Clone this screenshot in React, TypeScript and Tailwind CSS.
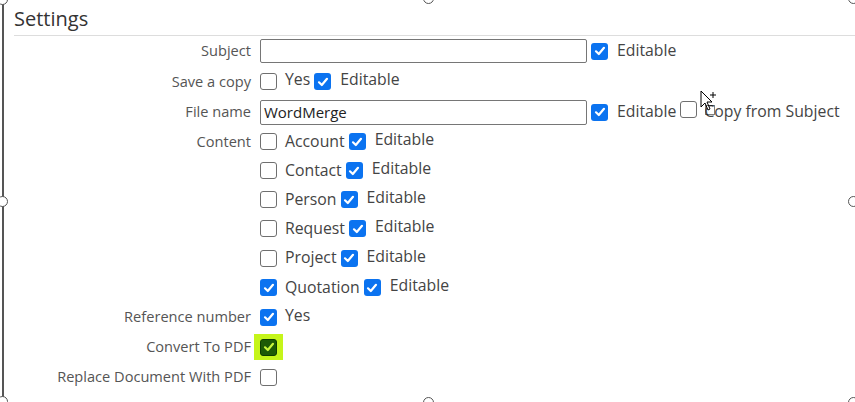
import React from "react";

const font = { fontFamily: '"Open Sans", "Noto Sans", sans-serif' };

function Box({ checked = false }: { checked?: boolean }) {
  if (checked) {
    return (
      <span className="inline-flex h-[17px] w-[17px] shrink-0 items-center justify-center rounded-[3px] bg-[#0b73f0]">
        <svg width="12" height="12" viewBox="0 0 12 12">
          <path d="M2 6.3 L4.8 9 L10 2.8" fill="none" stroke="#fff" strokeWidth="2.2" strokeLinecap="round" strokeLinejoin="round" />
        </svg>
      </span>
    );
  }
  return <span className="inline-block h-[17px] w-[17px] shrink-0 rounded-[3px] border border-[#6f6f6f] bg-white" />;
}

function Row({ label, h, children }: { label?: string; h: string; children?: React.ReactNode }) {
  return (
    <div className={`flex items-center ${h}`}>
      <div className="w-[237px] shrink-0 whitespace-nowrap text-right text-[14.6px] text-[#555]">{label}</div>
      <div className="ml-[9px] flex items-center whitespace-nowrap">{children}</div>
    </div>
  );
}

function Txt({ children, cls = "" }: { children: React.ReactNode; cls?: string }) {
  return <span className={`text-[15.8px] leading-none text-[#444] ${cls}`}>{children}</span>;
}

function Handle({ cls }: { cls: string }) {
  return <span className={`absolute h-[11px] w-[11px] rounded-full border-[1.5px] border-[#555] bg-white ${cls}`} />;
}

function ContentRow({ name, h, checked = false }: { name: string; h: string; checked?: boolean }) {
  return (
    <Row label={name === "Account" ? "Content" : undefined} h={h}>
      <Box checked={checked} />
      <Txt cls="ml-[8px]">{name}</Txt>
      <span className="ml-[4px]">
        <Box checked />
      </span>
      <Txt cls="ml-[9px] -mt-[3px]">Editable</Txt>
    </Row>
  );
}

export default function App() {
  return (
    <div className="relative h-[402px] w-[855px] overflow-hidden bg-white" style={font}>
      <div className="absolute left-[2px] top-0 h-[402px] w-[2px] bg-[#555]" />
      <Handle cls="left-[-3px] top-[-6px]" />
      <Handle cls="left-[423px] top-[-7px]" />
      <Handle cls="left-[-3px] top-[196px]" />
      <Handle cls="left-[-3px] top-[396px]" />
      <Handle cls="left-[423px] top-[397px]" />
      <Handle cls="left-[848px] top-[-7px]" />
      <Handle cls="left-[848px] top-[196px]" />
      <Handle cls="left-[848px] top-[397px]" />

      <div className="pl-[14px]">
        <div className="h-[36px] pt-[6px]">
          <div className="text-[20px] leading-[26px] text-[#333]">Settings</div>
          <div className="mt-[3px] h-[1px] bg-[#ddd]" />
        </div>

        <Row label="Subject" h="h-[30px]">
          <span className="block h-[24px] w-[327px] rounded-[2px] border border-[#767676] bg-white" />
          <span className="ml-[4px]"><Box checked /></span>
          <Txt cls="ml-[9px]">Editable</Txt>
        </Row>

        <Row label="Save a copy" h="h-[31px]">
          <Box />
          <Txt cls="ml-[8px] -mt-[3px]">Yes</Txt>
          <span className="ml-[4px]"><Box checked /></span>
          <Txt cls="ml-[9px] -mt-[3px]">Editable</Txt>
        </Row>

        <Row label="File name" h="h-[30px]">
          <span className="flex h-[25px] w-[327px] items-center rounded-[2px] border border-[#767676] bg-white pl-[3px] text-[15px] text-[#222]">
            WordMerge
          </span>
          <span className="ml-[4px]"><Box checked /></span>
          <Txt cls="ml-[9px]">Editable</Txt>
          <span className="ml-[4px]"><Box /></span>
          <Txt cls="ml-[7px]">Copy from Subject</Txt>
        </Row>

        <ContentRow name="Account" h="h-[29px]" />
        <ContentRow name="Contact" h="h-[29px]" />
        <ContentRow name="Person" h="h-[29px]" />
        <ContentRow name="Request" h="h-[29px]" />
        <ContentRow name="Project" h="h-[30px]" />
        <ContentRow name="Quotation" h="h-[29px]" checked />

        <Row label="Reference number" h="h-[30px]">
          <Box checked />
          <Txt cls="ml-[8px] -mt-[3px]">Yes</Txt>
        </Row>

        <Row label="Convert To PDF" h="h-[30px]">
          <span className="-ml-[6px] flex h-[26px] w-[29px] items-center justify-center bg-[#c5f51a]">
            <span className="inline-flex h-[17px] w-[17px] items-center justify-center rounded-[3px] border border-[#0d3d00] bg-[#1d5a06]">
              <svg width="12" height="12" viewBox="0 0 12 12">
                <path d="M2 6.3 L4.8 9 L10 2.8" fill="none" stroke="#c8f53a" strokeWidth="2.2" strokeLinecap="round" strokeLinejoin="round" />
              </svg>
            </span>
          </span>
        </Row>

        <Row label="Replace Document With PDF" h="h-[30px]">
          <Box />
        </Row>
      </div>

      <svg className="absolute left-[700px] top-[90px]" width="20" height="26" viewBox="0 0 20 26">
        <path d="M1 1 L1 17 L5 13 L8 20 L10 19 L7 12 L12 12 Z" fill="#fff" stroke="#000" strokeWidth="1" />
        <path d="M13 2 L13 8 M10 5 L16 5" stroke="#000" strokeWidth="1" />
        <rect x="5.5" y="15.5" width="9" height="9" fill="none" stroke="#000" strokeWidth="1" strokeDasharray="1 1" />
      </svg>
    </div>
  );
}
